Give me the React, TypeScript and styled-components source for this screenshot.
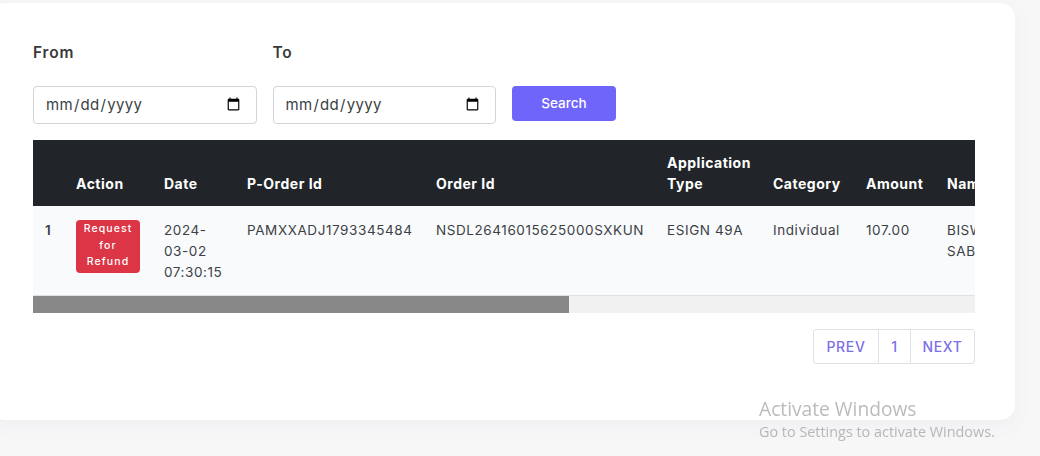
import React from "react";
import styled, { createGlobalStyle } from "styled-components";

const TABLE_WIDTH = 1655;
const VIEW_WIDTH = 942;

const columns = [
  { label: "", width: 31 },
  { label: "Action", width: 88 },
  { label: "Date", width: 83 },
  { label: "P-Order Id", width: 189 },
  { label: "Order Id", width: 231 },
  { label: "Application Type", width: 106 },
  { label: "Category", width: 93 },
  { label: "Amount", width: 81 },
  { label: "Name", width: 110 },
  { label: "Mobile", width: 130 },
  { label: "Email", width: 263 },
  { label: "Status", width: 250 },
];

function App() {
  const thumbWidth = Math.round((VIEW_WIDTH * VIEW_WIDTH) / TABLE_WIDTH);

  return (
    <>
      <GlobalStyle />
      <StCard>
        <StFilters>
          <StField>
            <StLabel htmlFor="from">From</StLabel>
            <StDateInput id="from" type="date" />
          </StField>
          <StField>
            <StLabel htmlFor="to">To</StLabel>
            <StDateInput id="to" type="date" />
          </StField>
          <StSearch>Search</StSearch>
        </StFilters>

        <StTableWrap>
          <StTable>
            <colgroup>
              {columns.map((c, i) => (
                <col key={i} width={c.width} />
              ))}
            </colgroup>
            <thead>
              <tr>
                {columns.map((c, i) => (
                  <StTh key={i}>{c.label}</StTh>
                ))}
              </tr>
            </thead>
            <tbody>
              <tr>
                <StIndexCell>1</StIndexCell>
                <StTd>
                  <StRefund>Request for Refund</StRefund>
                </StTd>
                <StTd>2024-03-02 07:30:15</StTd>
                <StTd>PAMXXADJ1793345484</StTd>
                <StTd>NSDL26416015625000SXKUN</StTd>
                <StTd>ESIGN 49A</StTd>
                <StTd>Individual</StTd>
                <StTd>107.00</StTd>
                <StTd>BISWAJIT SABAR</StTd>
                <StTd>9000000000</StTd>
                <StTd>biswajit@example.com</StTd>
                <StTd>Success</StTd>
              </tr>
            </tbody>
          </StTable>
        </StTableWrap>
        <StScrollTrack>
          <StScrollThumb style={{ width: thumbWidth }} />
        </StScrollTrack>

        <StPagerRow>
          <StPager>
            <StPageLink $width={64}>PREV</StPageLink>
            <StPageLink $width={32}>1</StPageLink>
            <StPageLink $width={64}>NEXT</StPageLink>
          </StPager>
        </StPagerRow>
      </StCard>

      <StWatermark>
        <StWatermarkTitle>Activate Windows</StWatermarkTitle>
        <StWatermarkText>Go to Settings to activate Windows.</StWatermarkText>
      </StWatermark>
    </>
  );
}

export default App;

const GlobalStyle = createGlobalStyle`
  html, body {
    margin: 0;
    height: 456px;
    overflow: hidden;
    background: #f7f7f8;
    font-family: Inter, "Liberation Sans", sans-serif;
    color: #33363a;
  }
  * {
    box-sizing: border-box;
  }
`;

const StCard = styled.div`
  width: 1025px;
  height: 417px;
  margin: 3px 0 0 -10px;
  padding: 40px 40px 0 43px;
  background: #fff;
  border-radius: 15px;
  box-shadow: 0 6px 20px rgba(90, 90, 140, 0.05);
`;

const StFilters = styled.div`
  display: flex;
  align-items: flex-start;
  gap: 16px;
  height: 97px;
`;

const StField = styled.div`
  display: flex;
  flex-direction: column;
`;

const StLabel = styled.label`
  height: 43px;
  font-size: 15.5px;
  line-height: 19px;
  font-weight: 600;
  letter-spacing: 0.8px;
  color: #3a3a3a;
`;

const StDateInput = styled.input`
  width: 223.5px;
  height: 38px;
  padding: 0 13px 2px 11px;
  border: 1px solid #d3d5d8;
  border-radius: 4px;
  background: #fff;
  font-family: Inter, "Liberation Sans", sans-serif;
  font-size: 15px;
  letter-spacing: 0.3px;
  color: #3c3f44;
`;

const StSearch = styled.button`
  width: 104px;
  height: 35px;
  margin-top: 43px;
  padding: 0 0 2px;
  border: none;
  border-radius: 4px;
  background: #7065fb;
  color: #fff;
  font-family: Inter, "Liberation Sans", sans-serif;
  font-size: 13.5px;
  font-weight: 500;
`;

const StTableWrap = styled.div`
  width: ${VIEW_WIDTH}px;
  overflow: hidden;
`;

const StTable = styled.table`
  width: ${TABLE_WIDTH}px;
  table-layout: fixed;
  border-collapse: collapse;
  font-size: 14px;
  line-height: 21px;
`;

const StTh = styled.th`
  height: 66px;
  padding: 12px;
  background: #212529;
  color: #fff;
  font-size: 14px;
  font-weight: 700;
  text-align: left;
  vertical-align: bottom;
  letter-spacing: 0.5px;
`;

const StTd = styled.td`
  height: 89px;
  padding: 14px 12px 12px;
  background: #f9fafc;
  border-bottom: 1px solid #dee2e6;
  color: #3c3f44;
  font-size: 13.5px;
  letter-spacing: 0.58px;
  vertical-align: top;
`;

const StIndexCell = styled(StTd)`
  font-weight: 600;
`;

const StRefund = styled.div`
  width: 64px;
  height: 53px;
  padding: 1px 2px;
  border-radius: 4px;
  background: #dc3545;
  color: #fff;
  font-size: 10.5px;
  line-height: 16.5px;
  font-weight: 500;
  letter-spacing: 1.1px;
  text-align: center;
`;

const StScrollTrack = styled.div`
  width: ${VIEW_WIDTH}px;
  height: 17px;
  background: #f1f1f1;
`;

const StScrollThumb = styled.div`
  height: 100%;
  background: #888;
`;

const StPagerRow = styled.div`
  display: flex;
  justify-content: flex-end;
  width: ${VIEW_WIDTH}px;
  margin-top: 16px;
`;

const StPager = styled.div`
  display: flex;
  height: 35px;
  border: 1px solid #dee2e6;
  border-radius: 3px;
`;

const StPageLink = styled.span<{ $width: number }>`
  display: flex;
  align-items: center;
  justify-content: center;
  width: ${(props) => props.$width}px;
  color: #7b6fe6;
  font-size: 14px;
  font-weight: 500;
  letter-spacing: 0.7px;

  & + & {
    border-left: 1px solid #dee2e6;
  }
`;

const StWatermark = styled.div`
  position: fixed;
  left: 759px;
  top: 396px;
  color: rgba(120, 120, 120, 0.5);
  font-family: "Open Sans", "Liberation Sans", sans-serif;
`;

const StWatermarkTitle = styled.div`
  font-size: 19.2px;
  line-height: 26px;
`;

const StWatermarkText = styled.div`
  font-size: 14.4px;
  line-height: 20px;
`;
